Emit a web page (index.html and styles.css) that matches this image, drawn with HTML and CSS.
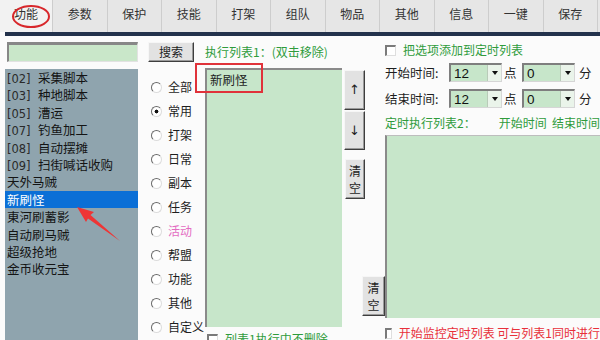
FILE: index.html
```html
<!DOCTYPE html>
<html lang="zh-CN">
<head>
    <meta charset="UTF-8">
    <title>功能设置</title>
    <link rel="stylesheet" href="styles.css">
</head>
<body>
    <div class="tabs">
        <div class="tab on">功能</div>
        <div class="tab">参数</div>
        <div class="tab">保护</div>
        <div class="tab">技能</div>
        <div class="tab">打架</div>
        <div class="tab">组队</div>
        <div class="tab">物品</div>
        <div class="tab">其他</div>
        <div class="tab">信息</div>
        <div class="tab">一键</div>
        <div class="tab">保存</div>
    </div>
    <div class="rule"></div>

    <div class="main">
        <div class="left">
            <div class="search-input"></div>
            <ul class="script-list">
                <li><span class="code">[02]</span>采集脚本</li>
                <li><span class="code">[03]</span>种地脚本</li>
                <li><span class="code">[05]</span>漕运</li>
                <li><span class="code">[07]</span>钓鱼加工</li>
                <li><span class="code">[08]</span>自动摆摊</li>
                <li><span class="code">[09]</span>扫街喊话收购</li>
                <li>天外马贼</li>
                <li class="sel">新刷怪</li>
                <li>東河刷蓄影</li>
                <li>自动刷马贼</li>
                <li>超级抢地</li>
                <li>金币收元宝</li>
            </ul>
        </div>

        <div class="mid">
            <div class="mid-top">
                <button class="btn search-btn">搜索</button>
                <span class="green head1">执行列表1：(双击移除)</span>
            </div>
            <div class="mid-body">
                <div class="radios">
                    <div class="radio-row"><span class="radio"></span>全部</div>
                    <div class="radio-row"><span class="radio checked"></span>常用</div>
                    <div class="radio-row"><span class="radio"></span>打架</div>
                    <div class="radio-row"><span class="radio"></span>日常</div>
                    <div class="radio-row"><span class="radio"></span>副本</div>
                    <div class="radio-row"><span class="radio"></span>任务</div>
                    <div class="radio-row pink"><span class="radio"></span>活动</div>
                    <div class="radio-row"><span class="radio"></span>帮盟</div>
                    <div class="radio-row"><span class="radio"></span>功能</div>
                    <div class="radio-row"><span class="radio"></span>其他</div>
                    <div class="radio-row"><span class="radio"></span>自定义</div>
                </div>
                <div class="list1-wrap">
                    <div class="list-box list1">
                        <div class="row">新刷怪</div>
                    </div>
                    <div class="check-row"><span class="check"></span><span class="green">列表1执行中不删除</span></div>
                </div>
                <div class="side-btns">
                    <button class="btn arrow-btn">↑</button>
                    <button class="btn arrow-btn down">↓</button>
                    <button class="btn clear-btn"><span>清</span><span>空</span></button>
                    <button class="btn clear-btn low"><span>清</span><span>空</span></button>
                </div>
            </div>
        </div>

        <div class="right">
            <div class="check-row opt"><span class="check"></span><span class="green">把选项添加到定时列表</span></div>
            <div class="time-row">
                <span class="time-label">开始时间:</span>
                <div class="combo"><span class="val">12</span><span class="drop"></span></div>
                <span class="unit">点</span>
                <div class="combo"><span class="val">0</span><span class="drop"></span></div>
                <span class="unit min">分</span>
            </div>
            <div class="time-row second">
                <span class="time-label">结束时间:</span>
                <div class="combo"><span class="val">12</span><span class="drop"></span></div>
                <span class="unit">点</span>
                <div class="combo"><span class="val">0</span><span class="drop"></span></div>
                <span class="unit min">分</span>
            </div>
            <div class="list2-head green">
                <span class="col-a">定时执行列表2：</span>
                <span class="col-b">开始时间</span>
                <span>结束时间</span>
            </div>
            <div class="list-box list2"></div>
            <div class="check-row bottom"><span class="check"></span><span class="red">开始监控定时列表 可与列表1同时进行</span></div>
        </div>
    </div>

    <!-- пометки поверх скриншота -->
    <div class="ann-ellipse"></div>
    <div class="ann-box"></div>
    <svg class="ann-arrow" width="600" height="340" viewBox="0 0 600 340">
        <polygon points="77,207 94,212 90.5,215 120,241 88,218.5 86,222" fill="#ee3535"/>
    </svg>
</body>
</html>
```

FILE: styles.css
```css
body { margin: 0; width: 600px; height: 340px; overflow: hidden; position: relative; background: #fbfbfb; color: #1e1e1e; font-family: "Noto Sans CJK SC", "DejaVu Sans", sans-serif; font-size: 12px; line-height: 16px; }

.tabs { display: flex; height: 32px; background: #e6e6e6; }
.tab { flex: none; width: 54.5px; box-sizing: border-box; border-right: 1px solid #cdcdcd; text-align: center; line-height: 28px; color: #333; }
.tab.on { width: 53px; background: #f2f2f2; }
.rule { height: 4px; margin-left: 5px; background: #23324c; }

.main { display: flex; height: 304px; white-space: nowrap; }

.left { width: 133px; margin-left: 5px; display: flex; flex-direction: column; }
.search-input { height: 20px; margin: 6px 0 0 2px; box-sizing: border-box; background: #c9e7c9; border-style: solid; border-width: 3px 1px 1px 2px; border-color: #878787 #e2e2e2 #e2e2e2 #878787; }
.script-list { flex: 1; margin: 7px 0 0; padding: 0; list-style: none; background: #8fa4ae; }
.script-list li { height: 17.4px; line-height: 17.4px; padding-left: 2px; font-size: 12.5px; color: #141414; }
.script-list li.sel { background: #0b6fd6; color: #fff; }
.script-list .code { display: inline-block; width: 31px; font-family: "DejaVu Sans", sans-serif; font-size: 11.5px; color: #2a2a2a; }

.btn { padding: 0; font: inherit; color: #1e1e1e; background: #e2e2e2; border: 1px solid; border-color: #f6f6f6 #3e3e3e #3e3e3e #f6f6f6; box-shadow: inset -1px -1px #9a9a9a; }

.mid { width: 237px; margin-left: 10px; display: flex; flex-direction: column; }
.mid-top { display: flex; align-items: center; height: 20px; margin-top: 6px; }
.search-btn { width: 46px; height: 20px; }
.head1 { margin-left: 11px; }
.mid-body { display: flex; margin-top: 6px; }

.green { color: #2f9b3b; }
.red { color: #e8303a; }
.pink { color: #e46cc2; }

.radios { width: 57px; padding-top: 7px; }
.radio-row { display: flex; align-items: center; height: 24px; }
.radio { width: 9px; height: 9px; margin: 0 6px 0 3px; border-radius: 50%; border: 1px solid; border-color: #6a6a6a #dcdcdc #dcdcdc #6a6a6a; background: #fff; }
.radio.checked { background: radial-gradient(circle, #111 0 1.7px, #fff 2.2px); }

.list1-wrap { width: 137px; }
.list-box { box-sizing: border-box; background: #c7e6ca; border-style: solid; border-color: #8a8a8a; }
.list1 { height: 259px; border-width: 2px 0 0 2px; padding: 1px 0 0 3px; }
.list1 .row { line-height: 17px; font-size: 12.5px; }

.check-row { display: flex; align-items: center; height: 14px; }
.check { width: 11px; height: 11px; margin-right: 7px; box-sizing: border-box; border-style: solid; border-width: 2px 1px 1px 2px; border-color: #7a7a7a #dedede #dedede #7a7a7a; background: #fff; }
.list1-wrap .check-row { margin: 5px 0 0 2px; }

.side-btns { width: 43px; display: flex; flex-direction: column; padding-top: 2px; }
.arrow-btn { width: 21px; height: 40px; margin-left: 2px; font-family: "DejaVu Sans", sans-serif; font-size: 13px; }
.arrow-btn.down { margin-top: 1px; height: 39px; }
.clear-btn { display: flex; flex-direction: column; align-items: center; justify-content: center; width: 20px; height: 40px; margin: 9px 0 0 3px; font-size: 12px; line-height: 17px; }
.clear-btn span { height: 17px; }
.clear-btn.low { width: 23px; margin: 77px 0 0 20px; }

.right { width: 215px; }
.opt { height: 20px; margin-top: 4px; }
.time-row { display: flex; align-items: center; height: 19px; margin-top: 3px; font-size: 12.5px; }
.time-row.second { margin-top: 7px; }
.time-label { width: 64px; }
.combo { display: flex; width: 53px; height: 19px; box-sizing: border-box; background: #c7e6ca; border-style: solid; border-width: 2px 1px 1px 2px; border-color: #7e7e7e #d6d6d6 #d6d6d6 #7e7e7e; }
.combo .val { flex: 1; padding-left: 3px; font-family: "Liberation Sans", sans-serif; font-size: 13.5px; line-height: 17px; color: #111; }
.combo .drop { width: 13px; display: flex; align-items: center; justify-content: center; background: #eaf4ea; border-left: 1px solid #b9cbb9; }
.combo .drop::before { content: ""; border: 3.5px solid transparent; border-top: 4px solid #111; border-bottom: 0; }
.unit { width: 20px; padding-left: 2px; box-sizing: border-box; }
.unit.min { padding-left: 4px; }

.list2-head { display: flex; height: 16px; margin-top: 7px; font-size: 12px; }
.col-a { width: 128px; }
.col-b { width: 60px; }
.list2 { height: 183px; margin-top: 4px; border-width: 1px 0 0 2px; border-top-color: #bdbdbd; }
.check-row.bottom { margin-top: 8px; }

.ann-ellipse { position: absolute; left: 12px; top: 5px; width: 34px; height: 19px; border: 2px solid #d8282c; border-radius: 50%; }
.ann-box { position: absolute; left: 195px; top: 63px; width: 64px; height: 26px; border: 2px solid #e0323a; }
.ann-arrow { position: absolute; left: 0; top: 0; pointer-events: none; }
```
